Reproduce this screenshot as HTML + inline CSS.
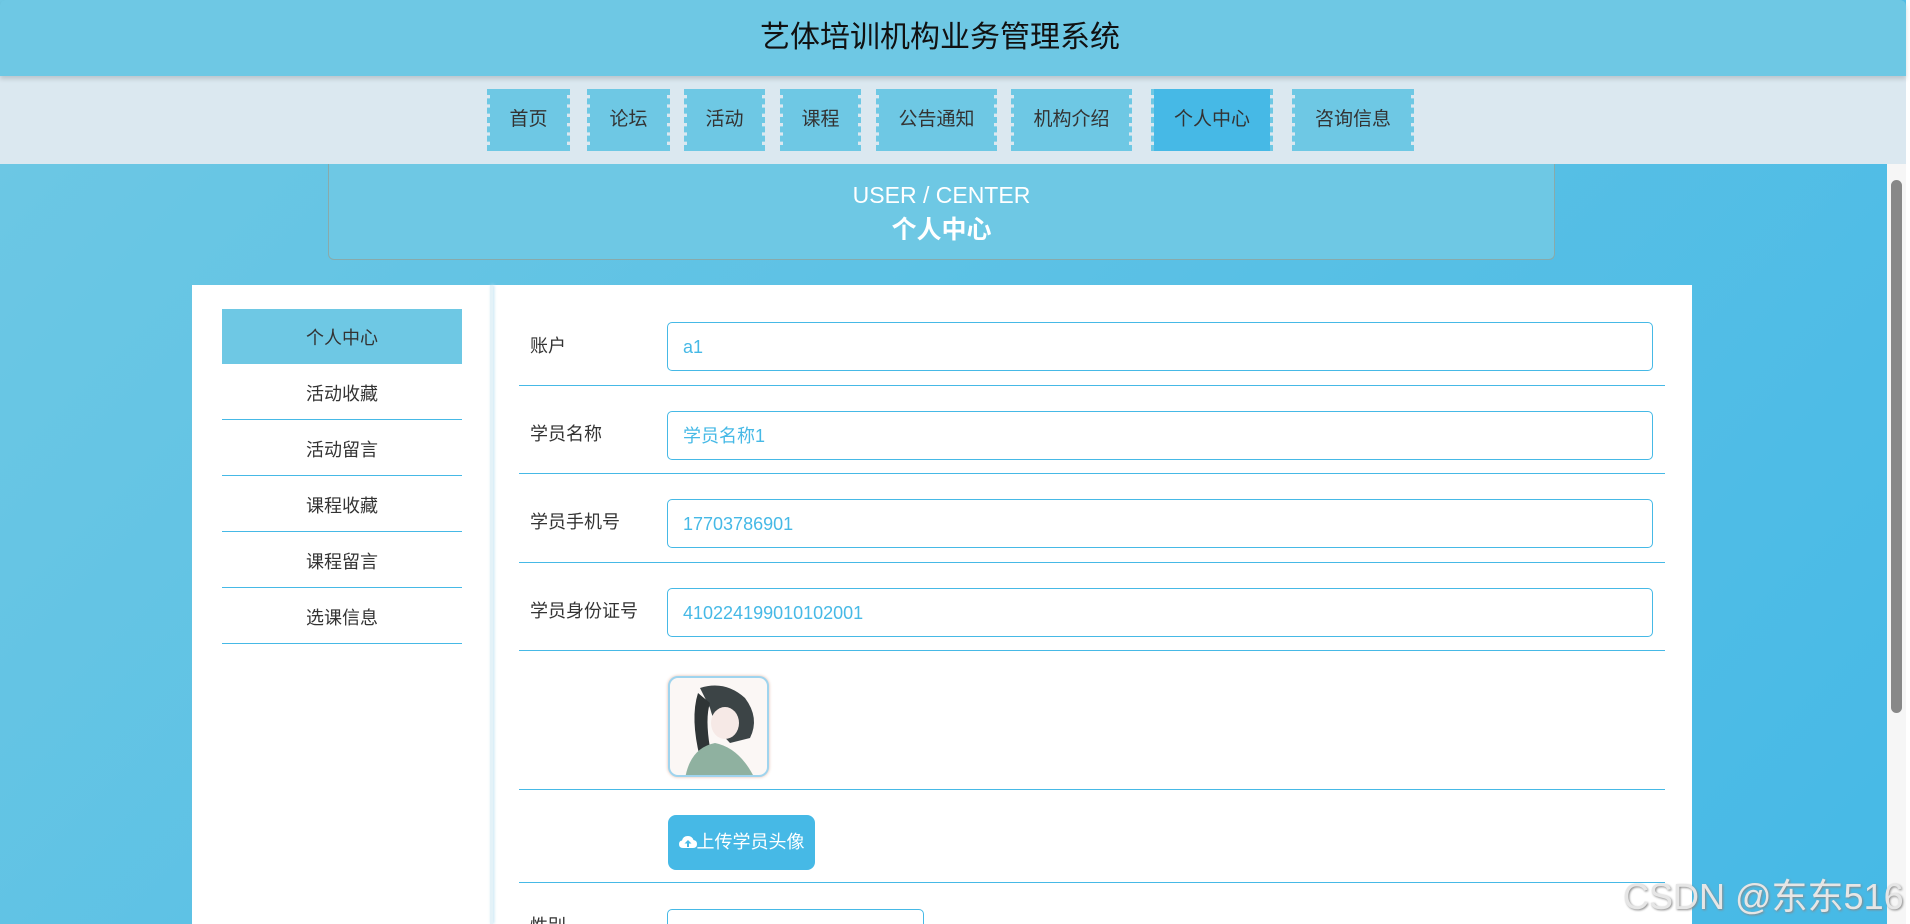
<!DOCTYPE html>
<html style="overflow:hidden;height:924px"><head><meta charset="utf-8"><style>
*{margin:0;padding:0;box-sizing:border-box}
html,body{width:1910px;height:924px;overflow:hidden}
#wrap{position:relative;width:1910px;height:924px;overflow:hidden;font-family:"Liberation Sans","Noto Sans CJK SC",sans-serif;background:linear-gradient(135deg,#6ec8e4,#46b9e6)}
.abs{position:absolute}
#hdr{left:0;top:0;width:1906px;height:76px;background:#6ec8e4;border-radius:6px 6px 0 0;box-shadow:0 3px 5px rgba(0,0,0,.15);font-size:30px;line-height:76px;color:#111;z-index:2}
#nav{left:0;top:76px;width:1906px;height:88px;background:#dbe8f0}
.ni{position:absolute;top:89px;height:62px;background:#6ec8e4;background-clip:padding-box;border-left:3px dashed #6ec8e4;border-right:3px dashed #6ec8e4;font-size:19px;color:#333;line-height:62px;text-align:center}
.ni.a{background-color:#46b9e6}
#ban{left:328px;top:164px;width:1227px;height:96px;background:#6ec8e4;border:1px solid #8aa;border-top:none;border-radius:0 0 6px 6px;text-align:center;color:#fff}
#panel{left:192px;top:285px;width:1500px;height:639px;background:#fff}
.si{position:absolute;left:222px;width:240px;height:56px;border-bottom:1px solid #46b9e6;text-align:center;line-height:56px;font-size:18px;color:#333}
.lab{position:absolute;left:530px;font-size:18px;color:#333}
.inp{position:absolute;left:667px;width:986px;height:49px;border:1px solid #46b9e6;border-radius:5px;font-size:18px;color:#46b9e6;line-height:49px;padding-left:15px}
.ln{position:absolute;left:519px;width:1146px;height:1px;background:#46b9e6}
</style></head><body><div id="wrap">
<div id="hdr" class="abs"><span style="position:absolute;left:760px">艺体培训机构业务管理系统</span></div>
<div id="nav" class="abs"></div>
<div class="ni" style="left:487px;width:83px">首页</div>
<div class="ni" style="left:587px;width:83px">论坛</div>
<div class="ni" style="left:684px;width:81px">活动</div>
<div class="ni" style="left:780px;width:81px">课程</div>
<div class="ni" style="left:876px;width:121px">公告通知</div>
<div class="ni" style="left:1011px;width:121px">机构介绍</div>
<div class="ni a" style="left:1151px;width:122px">个人中心</div>
<div class="ni" style="left:1292px;width:122px">咨询信息</div>
<div id="ban" class="abs"><div style="font-size:23px;padding-top:17px;line-height:28px">USER / CENTER</div><div style="font-size:25px;line-height:42px;font-weight:bold">个人中心</div></div>
<div id="panel" class="abs"></div>
<div class="abs" style="left:490px;top:285px;width:3px;height:639px;background:#e3f2f8;box-shadow:1px 0 3px #bfe3f1"></div>
<div class="si" style="top:309px;background:#6ec8e4;border:none;height:55px;line-height:58px">个人中心</div>
<div class="si" style="top:364px;line-height:60px">活动收藏</div>
<div class="si" style="top:420px;line-height:60px">活动留言</div>
<div class="si" style="top:476px;line-height:60px">课程收藏</div>
<div class="si" style="top:532px;line-height:60px">课程留言</div>
<div class="si" style="top:588px;line-height:60px">选课信息</div>
<div class="lab" style="top:332px">账户</div>
<div class="inp" style="top:322px">a1</div>
<div class="ln" style="top:385px"></div>
<div class="lab" style="top:420px">学员名称</div>
<div class="inp" style="top:411px">学员名称1</div>
<div class="ln" style="top:473px"></div>
<div class="lab" style="top:508px">学员手机号</div>
<div class="inp" style="top:499px">17703786901</div>
<div class="ln" style="top:562px"></div>
<div class="lab" style="top:597px">学员身份证号</div>
<div class="inp" style="top:588px">410224199010102001</div>
<div class="ln" style="top:650px"></div>
<div class="abs" style="left:668px;top:676px;width:101px;height:101px;border:2px solid #9fd4ee;border-radius:10px;box-shadow:0 0 3px #e0b9a8;overflow:hidden;background:#fbf7f5">
<svg width="101" height="101"><path d="M30 10 Q55 2 75 20 Q90 40 80 60 L60 65 Q45 50 40 30 Z" fill="#3c4446"/><path d="M28 15 Q20 40 30 80 L40 70 Q35 40 40 25Z" fill="#2f3536"/><ellipse cx="55" cy="45" rx="14" ry="16" fill="#f6e9e6"/><path d="M15 101 Q20 70 45 65 Q70 70 85 101Z" fill="#8fb1a0"/></svg></div>
<div class="ln" style="top:789px"></div>
<div class="abs" style="left:668px;top:815px;width:147px;height:55px;background:#46b9e6;border-radius:8px;color:#fff;font-size:18px;line-height:55px;text-align:center">
<svg width="18" height="14" style="vertical-align:-1px" viewBox="0 0 18 14"><path d="M4 13 Q0 13 0 9 Q0 6 3 5.5 Q4 1 9 1 Q13 1 14.5 5 Q18 5.5 18 9 Q18 13 14 13Z" fill="#fff"/><path d="M9 5 L5.5 8.5 H8 V12 H10 V8.5 H12.5Z" fill="#46b9e6"/></svg>上传学员头像</div>
<div class="ln" style="top:882px"></div>
<div class="lab" style="top:912px">性别</div>
<div class="abs" style="left:667px;top:909px;width:257px;height:40px;border:1px solid #46b9e6;border-radius:5px"></div>
<div class="abs" style="left:1887px;top:164px;width:19px;height:760px;background:#f6f6f6"></div>
<div class="abs" style="left:1891px;top:180px;width:11px;height:533px;background:#888;border-radius:6px"></div>
<div class="abs" style="left:1906px;top:0;width:4px;height:924px;background:#fff"></div>
<div class="abs" style="left:1623px;top:868px;font-size:36px;color:#e6e6e6;text-shadow:1px 1px 2px #888;white-space:nowrap">CSDN @东东516</div>
</div></body></html>
